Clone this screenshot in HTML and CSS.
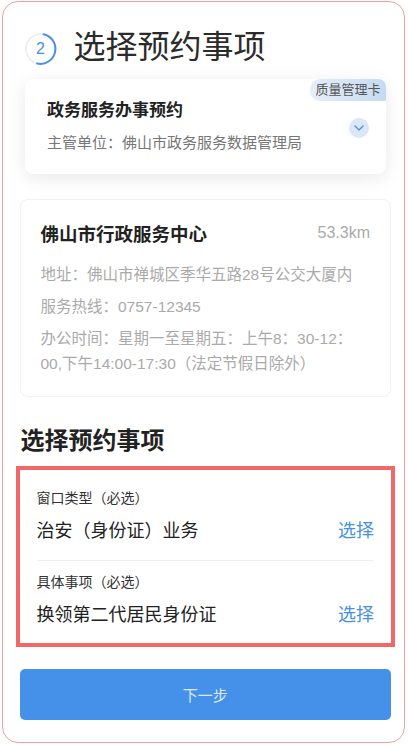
FILE: index.html
```html
<!DOCTYPE html>
<html lang="zh-CN">
<head>
  <meta charset="UTF-8">
  <meta name="viewport" content="width=device-width, initial-scale=1.0">
  <title>选择预约事项</title>
  <link rel="stylesheet" href="styles.css">
</head>
<body>
  <div class="frame">
    <div class="step-header">
      <div class="step-num">
        <svg width="34" height="34" viewBox="0 0 34 34">
          <circle cx="17" cy="17" r="15" fill="none" stroke="#ececec" stroke-width="1.5"/>
          <path d="M19.6 2.2 A15 15 0 1 1 13.1 31.5" fill="none" stroke="#4a90e2" stroke-width="2" stroke-linecap="round"/>
        </svg>
        <span>2</span>
      </div>
      <h1 class="step-title">选择预约事项</h1>
    </div>

    <div class="org-card">
      <div class="badge">质量管理卡</div>
      <div class="org-info">
        <div class="org-name">政务服务办事预约</div>
        <div class="org-dept">主管单位：佛山市政务服务数据管理局</div>
      </div>
      <div class="expand-btn">
        <svg width="10" height="6" viewBox="0 0 10 6">
          <path d="M1 1 L5 5 L9 1" fill="none" stroke="#4a90e2" stroke-width="1.3" stroke-linecap="round" stroke-linejoin="round"/>
        </svg>
      </div>
    </div>

    <div class="hall-card">
      <div class="hall-head">
        <span class="hall-name">佛山市行政服务中心</span>
        <span class="hall-dist">53.3km</span>
      </div>
      <p class="hall-line first">地址：佛山市禅城区季华五路28号公交大厦内</p>
      <p class="hall-line">服务热线：0757-12345</p>
      <p class="hall-line">办公时间：星期一至星期五：上午8：30-12：<br>00,下午14:00-17:30（法定节假日除外）</p>
    </div>

    <h2 class="section-title">选择预约事项</h2>

    <div class="select-box">
      <div class="select-row">
        <div class="select-label">窗口类型（必选）</div>
        <div class="select-value">
          <span>治安（身份证）业务</span>
          <a class="select-link">选择</a>
        </div>
      </div>
      <div class="select-row">
        <div class="select-label">具体事项（必选）</div>
        <div class="select-value">
          <span>换领第二代居民身份证</span>
          <a class="select-link">选择</a>
        </div>
      </div>
    </div>

    <button class="next-btn">下一步</button>
  </div>
</body>
</html>
```

FILE: styles.css
```css
* {
  margin: 0;
  padding: 0;
  box-sizing: border-box;
  font-family: "Liberation Sans", "Noto Sans CJK SC", sans-serif;
}

body {
  background-color: #fff;
  width: 408px;
  height: 745px;
  overflow: hidden;
}

/* outer phone frame */
.frame {
  margin: 1px 0 0 2px;
  width: 403px;
  height: 742px;
  border: 1.5px solid #f0a0a0;
  border-radius: 16px;
  padding: 0 13px 0 16.5px;
}

/* step header */
.step-header {
  display: flex;
  align-items: center;
  height: 40px;
  margin-top: 26.5px;
  padding-left: 4px;
}

.step-num {
  position: relative;
  width: 34px;
  height: 34px;
}

.step-num svg {
  display: block;
}

.step-num span {
  position: absolute;
  left: 0;
  top: 0;
  width: 34px;
  line-height: 34px;
  text-align: center;
  color: #4a90e2;
  font-size: 16px;
}

.step-title {
  margin-left: 16px;
  font-size: 32px;
  font-weight: normal;
  color: #2b2b2b;
  line-height: 40px;
  margin-top: -3px;
}

/* organization card */
.org-card {
  position: relative;
  margin: 10px 5px 0 5.5px;
  height: 95px;
  background-color: #fff;
  border-radius: 8px;
  box-shadow: 0 4px 18px rgba(0, 0, 0, 0.09);
  display: flex;
  align-items: center;
  justify-content: space-between;
  padding: 0 17px 0 22px;
}

.badge {
  position: absolute;
  top: 0;
  right: 0;
  width: 76px;
  height: 22px;
  line-height: 22px;
  text-align: center;
  font-size: 13px;
  color: #555;
  border-radius: 10px 8px 0 10px;
  background: linear-gradient(to right, #e6eef9, #c6daf2);
}

.org-name {
  font-size: 17px;
  font-weight: bold;
  color: #222;
  line-height: 22px;
  margin-top: 2px;
}

.org-dept {
  margin-top: 10px;
  font-size: 15px;
  color: #777;
  line-height: 22px;
}

.expand-btn {
  width: 20px;
  height: 20px;
  border-radius: 50%;
  background-color: #dbe7f6;
  display: flex;
  align-items: center;
  justify-content: center;
  margin-top: 4px;
}

/* service hall card */
.hall-card {
  margin-top: 25px;
  border: 1px solid #f1f1f1;
  border-radius: 8px;
  padding: 21px 20px 20px 20px;
}

.hall-head {
  display: flex;
  justify-content: space-between;
  align-items: center;
  height: 24px;
}

.hall-name {
  font-size: 18.5px;
  font-weight: bold;
  color: #222;
}

.hall-dist {
  font-size: 16px;
  color: #aaa;
}

.hall-line {
  font-size: 15.5px;
  line-height: 25px;
  color: #aaa;
  margin-top: 7px;
}

.hall-line.first {
  margin-top: 17px;
}

/* select section */
.section-title {
  margin-top: 29px;
  font-size: 24px;
  font-weight: bold;
  color: #222;
  line-height: 30px;
  padding-left: 1px;
}

.select-box {
  margin: 10px -4px 0 -4px;
  border: 4px solid #f06868;
  padding: 0 17px 15px 17px;
}

.select-row {
  padding-top: 18px;
}

.select-row + .select-row {
  border-top: 1px solid #efefef;
  padding-top: 11px;
  margin-top: 16px;
}

.select-label {
  font-size: 14px;
  line-height: 20px;
  color: #333;
}

.select-value {
  display: flex;
  justify-content: space-between;
  align-items: center;
  margin-top: 11px;
  font-size: 18px;
  line-height: 25px;
  color: #222;
}

.select-link {
  color: #4a90e2;
  cursor: pointer;
}

/* next button */
.next-btn {
  display: block;
  width: 100%;
  height: 51px;
  margin-top: 22px;
  border: none;
  border-radius: 5px;
  background-color: #4591e9;
  color: #dce9fb;
  font-size: 15px;
}
```
